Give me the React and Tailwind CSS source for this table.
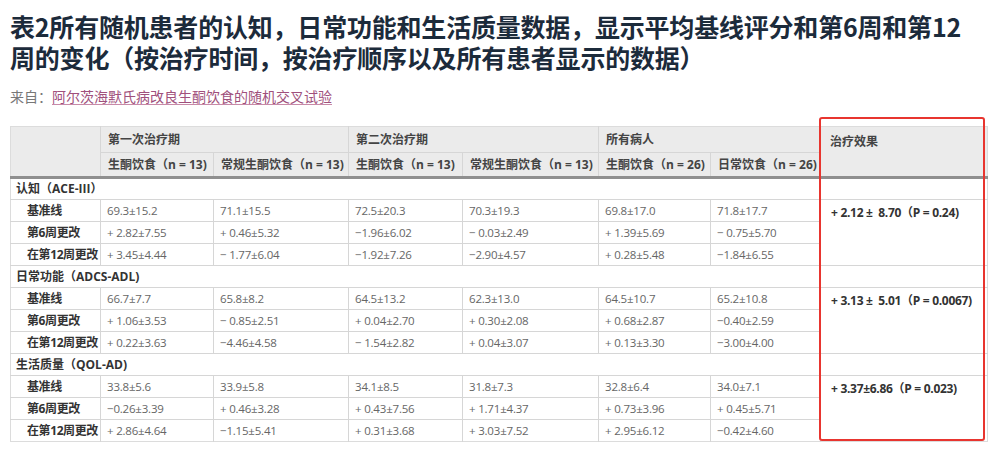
const sections = [
  {
    title: "认知（ACE-III）",
    effect: "+ 2.12 ±  8.70（P = 0.24)",
    rows: [
      ["基准线", "69.3±15.2", "71.1±15.5", "72.5±20.3", "70.3±19.3", "69.8±17.0", "71.8±17.7"],
      ["第6周更改", "+ 2.82±7.55", "+ 0.46±5.32", "−1.96±6.02", "− 0.03±2.49", "+ 1.39±5.69", "− 0.75±5.70"],
      ["在第12周更改", "+ 3.45±4.44", "− 1.77±6.04", "−1.92±7.26", "−2.90±4.57", "+ 0.28±5.48", "−1.84±6.55"],
    ],
  },
  {
    title: "日常功能（ADCS-ADL)",
    effect: "+ 3.13 ±  5.01（P = 0.0067)",
    rows: [
      ["基准线", "66.7±7.7", "65.8±8.2", "64.5±13.2", "62.3±13.0", "64.5±10.7", "65.2±10.8"],
      ["第6周更改", "+ 1.06±3.53", "− 0.85±2.51", "+ 0.04±2.70", "+ 0.30±2.08", "+ 0.68±2.87", "−0.40±2.59"],
      ["在第12周更改", "+ 0.22±3.63", "−4.46±4.58", "− 1.54±2.82", "+ 0.04±3.07", "+ 0.13±3.30", "−3.00±4.00"],
    ],
  },
  {
    title: "生活质量（QOL-AD)",
    effect: "+ 3.37±6.86（P = 0.023)",
    rows: [
      ["基准线", "33.8±5.6", "33.9±5.8", "34.1±8.5", "31.8±7.3", "32.8±6.4", "34.0±7.1"],
      ["第6周更改", "−0.26±3.39", "+ 0.46±3.28", "+ 0.43±7.56", "+ 1.71±4.37", "+ 0.73±3.96", "+ 0.45±5.71"],
      ["在第12周更改", "+ 2.86±4.64", "−1.15±5.41", "+ 0.31±3.68", "+ 3.03±7.52", "+ 2.95±6.12", "−0.42±4.60"],
    ],
  },
];

const colWidths = [90, 113, 135, 114, 136, 112, 110, 167];

const font = { fontFamily: '"Open Sans", "Noto Sans CJK SC", sans-serif' };

export default function App() {
  return (
    <div className="w-[1000px] h-[450px] bg-white overflow-hidden relative" style={font}>
      {/* TITLE */}
      <h1
        className="ml-[10px] w-[965px] pt-[11px] text-[25px] leading-[31px] font-bold text-[#1c2b3b] tracking-[-0.2px]"
        style={{ fontFamily: '"Noto Sans CJK SC", sans-serif' }}
      >
        表2所有随机患者的认知，日常功能和生活质量数据，显示平均基线评分和第6周和第12周的变化（按治疗时间，按治疗顺序以及所有患者显示的数据）
      </h1>

      {/* SOURCE */}
      <p
        className="px-[10px] mt-[13px] text-[14px] leading-[20px] text-[#777]"
        style={{ fontFamily: '"Noto Sans CJK SC", serif' }}
      >
        来自：<span className="text-[#a0507c] underline underline-offset-2 decoration-[#c78aa8]">阿尔茨海默氏病改良生酮饮食的随机交叉试验</span>
      </p>

      {/* TABLE */}
      <div className="px-[10px] mt-[20px]">
        <table className="border-collapse table-fixed w-[977px] border border-[#dcdcdc] text-[12px]">
          <colgroup>
            {colWidths.map((w, i) => (
              <col key={i} style={{ width: w }} />
            ))}
          </colgroup>
          <thead>
            <tr className="bg-[#ebebeb] text-[#444] font-bold">
              <th rowSpan={2} className="border-r border-[#d6d6d6] border-b-[3px] border-b-[#8f8f8f]"></th>
              <th colSpan={2} className="h-[26px] text-left pl-[7px] border-r border-b border-[#d6d6d6]">第一次治疗期</th>
              <th colSpan={2} className="h-[26px] text-left pl-[7px] border-r border-b border-[#d6d6d6]">第二次治疗期</th>
              <th colSpan={2} className="h-[26px] text-left pl-[7px] border-r border-b border-[#d6d6d6]">所有病人</th>
              <th rowSpan={2} className="text-left align-top pl-[9px] pt-[6px] border-b-[3px] border-b-[#8f8f8f]">治疗效果</th>
            </tr>
            <tr className="bg-[#ebebeb] text-[#444] font-bold">
              {["生酮饮食（n = 13)", "常规生酮饮食（n = 13)", "生酮饮食（n = 13)", "常规生酮饮食（n = 13)", "生酮饮食（n = 26)", "日常饮食（n = 26)"].map((h, i) => (
                <th
                  key={i}
                  className="h-[25px] text-left pl-[7px] whitespace-nowrap border-r border-[#d6d6d6] border-b-[3px] border-b-[#8f8f8f]"
                >
                  {h}
                </th>
              ))}
            </tr>
          </thead>
          <tbody>
            {sections.map((s) => (
              <Section key={s.title} section={s} />
            ))}
          </tbody>
        </table>
      </div>

      {/* RED HIGHLIGHT */}
      <div className="absolute left-[819px] top-[117px] w-[166px] h-[324px] border-[2.5px] border-[#e8352f] rounded-[3px] pointer-events-none"></div>
    </div>
  );
}

function Section({ section }) {
  return (
    <>
      <tr className="border-t border-[#d6d6d6]">
        <td colSpan={8} className="h-[22px] pl-[5px] font-bold text-[#333]">
          {section.title}
        </td>
      </tr>
      {section.rows.map((r, ri) => (
        <tr key={ri}>
          <td className="h-[22px] pl-[16px] font-bold text-[#333] tracking-[-0.4px] whitespace-nowrap border-t border-r border-[#d6d6d6]">
            {r[0]}
          </td>
          {r.slice(1).map((v, i) => (
            <td key={i} className="pl-[6px] text-[11.5px] text-[#666] tracking-[-0.2px] whitespace-nowrap border-t border-r border-[#d6d6d6]">
              {v}
            </td>
          ))}
          {ri === 0 && (
            <td
              rowSpan={3}
              className="align-top pl-[10px] pt-[4px] font-bold text-[#333] tracking-[-0.3px] whitespace-pre border-t border-[#d6d6d6]"
            >
              {section.effect}
            </td>
          )}
        </tr>
      ))}
    </>
  );
}
